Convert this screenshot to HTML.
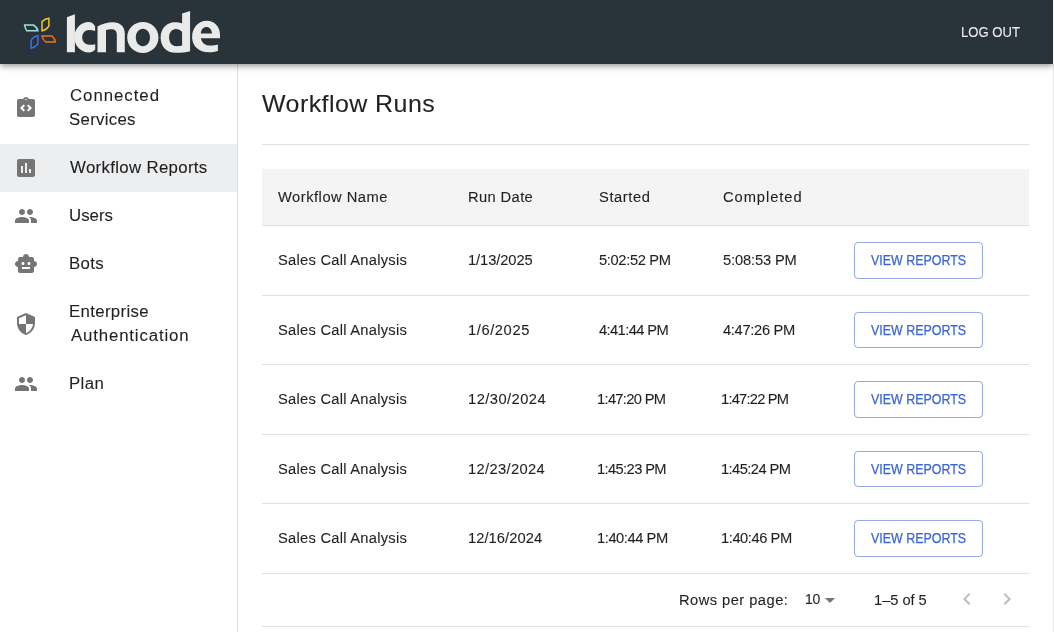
<!DOCTYPE html>
<html><head><meta charset="utf-8">
<style>
*{margin:0;padding:0;box-sizing:border-box}
html,body{width:1054px;height:632px;overflow:hidden;background:#fff;font-family:"Liberation Sans",sans-serif;color:rgba(0,0,0,0.87)}
.abs{position:absolute;white-space:nowrap;-webkit-text-stroke:0.1px currentColor}
#hdr{position:absolute;left:0;top:0;width:1053px;height:64px;background:#29333a;box-shadow:0 2px 4px -1px rgba(0,0,0,0.2),0 4px 5px 0 rgba(0,0,0,0.14),0 1px 10px 0 rgba(0,0,0,0.12);z-index:5}
#edge{position:absolute;left:1053px;top:0;width:1px;height:632px;background:#e6e6e6}
#edgetop{position:absolute;left:1053px;top:0;width:1px;height:64px;background:#f4f4f4;z-index:6}
#side{position:absolute;left:0;top:64px;width:238px;height:568px;border-right:1px solid #e0e0e0;background:#fff}
.sel{position:absolute;left:0;top:144px;width:237px;height:48px;background:#edeef0}
.nav{font-size:16px;line-height:24px;color:rgba(0,0,0,0.87)}
.ico{position:absolute;fill:#757575}
.t14{font-size:14px;line-height:20px}
.line{position:absolute;height:1px;background:#e0e0e0}
.btn{position:absolute;left:854px;width:129px;height:36.5px;border:1px solid rgba(59,101,212,0.55);border-radius:4px;color:#3b65d4;font-size:13px;line-height:34px;text-align:center;letter-spacing:0px}
#root{position:absolute;left:0;top:0;width:1054px;height:632px;overflow:hidden;background:#fff;will-change:transform}
</style></head><body><div id="root">
<div id="hdr">
  <svg width="230" height="64" style="position:absolute;left:0;top:0" viewBox="0 0 230 64">
    <g fill="none" stroke-width="1.5" stroke-linejoin="miter">
      <path d="M24.6 25 L33.4 25 C35.8 26.5 37.5 28.5 37.9 30.8 L26.8 30.8 C25.7 29 24.8 27 24.6 25 Z" stroke="#9de2db"/>
      <path d="M42 30.8 L42 21.6 C44 19.8 46.3 18.6 48.9 18.3 L48.9 26 C47.2 28.5 44.8 30.4 42 30.8 Z" stroke="#f3c52c"/>
      <path d="M37.9 35.7 L37.9 44 C36 46.1 33.7 47.8 31.1 48.3 L31.1 40.3 C32.7 37.8 35 36.1 37.9 35.7 Z" stroke="#3b6fe8"/>
      <path d="M42 36 L52 36 C53.8 37.6 55 39.7 55.2 42 L45.7 42 C43.7 40.4 42.3 38.4 42 36 Z" stroke="#ee7519"/>
    </g>
    <g fill="#eaeae9" fill-rule="evenodd">
      <path d="M66.9 17.3 L74.9 14.2 L74.9 52.3 L66.9 52.3 Z"/>
      <path d="M95.1 31 L95.1 26.3 C93.4 23.6 91.3 22.1 88.8 22.1 C80.8 22.1 74.3 28.9 74.3 37.3 C74.3 45.7 80.8 52.5 88.8 52.5 C91.3 52.5 93.6 51.5 95.2 49.5 L95.2 44.2 C93.8 44.6 90.5 44.8 88.9 44.7 C85.2 44.7 82.2 41.4 82.2 37.3 C82.2 33.2 85.2 30 88.9 30 C91 30 93.2 30.4 95.1 31 Z"/>
      <path d="M97.5 52.3 L97.5 26.4 C101.5 24.4 107.5 22.3 113 22.3 C120 22.3 124.8 26.5 124.8 33.5 L124.8 52.3 L116.8 52.3 L116.8 34.5 C116.8 31.2 114.8 29.3 111.5 29.3 C109.5 29.3 107.5 29.6 106 30.1 L106 52.3 Z"/>
      <path d="M142.85 22.1 C151.6 22.1 158.5 28.8 158.5 37.55 C158.5 46.3 151.6 53 142.85 53 C134.1 53 127.2 46.3 127.2 37.55 C127.2 28.8 134.1 22.1 142.85 22.1 Z M142.9 28.8 C138.9 28.8 135.8 32.6 135.8 37.55 C135.8 42.5 138.9 46.3 142.9 46.3 C146.9 46.3 150 42.5 150 37.55 C150 32.6 146.9 28.8 142.9 28.8 Z"/>
      <path d="M182.1 13.5 L190.1 10.9 L190.1 51.3 C186.5 52.4 181 52.8 175.4 52.8 C166.4 52.8 160.6 46.3 160.6 37.5 C160.6 28.6 166.6 22.2 174.6 22.2 C177.4 22.2 180 22.6 182.1 23.3 Z M182.1 32 C180.5 30 178.3 29 175.8 29 C171.8 29 169.1 32.5 169.1 37.6 C169.1 42.8 172 46.3 176.3 46.3 C178.5 46.3 180.5 46 182.1 45.5 Z"/>
      <path d="M220 38.2 L200.9 38.2 C201.6 42.7 205.1 45.6 210.6 45.6 C213.3 45.6 215.6 45.1 217.9 44.4 L217.9 50.9 C215.3 51.8 212.3 52.2 209 52.2 C198.6 52.2 192.1 46 192.1 36.9 C192.1 27.5 198.6 20.7 206.5 20.7 C214.5 20.7 220 26.5 220 34.5 Z M200.8 33.4 L212 33.4 C211.7 29.5 209.5 27.1 206.4 27.1 C203.3 27.1 201.2 29.5 200.8 33.4 Z"/>
    </g>
  </svg>
  <div class="abs" style="left:960.7px;top:22px;font-size:14px;line-height:20px;transform:scaleX(0.935);transform-origin:0 0;color:#ececec">LOG OUT</div>
</div>
<div id="edge"></div><div id="edgetop"></div>


<div id="side"></div><div class="sel"></div>
<svg class="abs" style="left:14px;top:96px" width="24" height="24" viewBox="0 0 24 24"><path fill="#757575" d="M19 3h-4.18C14.4 1.84 13.3 1 12 1s-2.4.84-2.82 2H5c-.14 0-.27.01-.4.04-.39.08-.74.28-1.01.55-.18.18-.33.4-.43.64S3 4.72 3 5v14c0 .27.05.54.13.78s.25.46.43.64c.27.27.62.47 1.01.55.13.02.26.03.4.03h14c1.1 0 2-.9 2-2V5c0-1.1-.9-2-2-2zm-8 11.17-1.41 1.42L6 12l3.59-3.59L11 9.83 8.84 12 11 14.17zm1-9.92c-.41 0-.75-.34-.75-.75s.34-.75.75-.75.75.34.75.75-.34.75-.75.75zm2.41 11.34L13 14.17 15.16 12 13 9.83l1.41-1.42L18 12l-3.59 3.59z"/></svg>
<svg class="abs" style="left:14px;top:156px" width="24" height="24" viewBox="0 0 24 24"><path fill="#757575" d="M19 3H5c-1.1 0-2 .9-2 2v14c0 1.1.9 2 2 2h14c1.1 0 2-.9 2-2V5c0-1.1-.9-2-2-2zM9 17H7v-7h2v7zm4 0h-2V7h2v10zm4 0h-2v-4h2v4z"/></svg>
<svg class="abs" style="left:14px;top:204px" width="24" height="24" viewBox="0 0 24 24"><path fill="#757575" d="M16 11c1.66 0 2.99-1.34 2.99-3S17.66 5 16 5c-1.66 0-3 1.34-3 3s1.34 3 3 3zm-8 0c1.66 0 2.99-1.34 2.99-3S9.66 5 8 5C6.34 5 5 6.34 5 8s1.34 3 3 3zm0 2c-2.33 0-7 1.17-7 3.5V19h14v-2.5c0-2.33-4.67-3.5-7-3.5zm8 0c-.29 0-.62.02-.97.05 1.16.84 1.97 1.97 1.97 3.45V19h6v-2.5c0-2.33-4.67-3.5-7-3.5z"/></svg>
<svg class="abs" style="left:14px;top:252px" width="24" height="24" viewBox="0 0 24 24"><path fill="#757575" d="M20 9V7c0-1.1-.9-2-2-2h-3c0-1.66-1.34-3-3-3S9 3.34 9 5H6c-1.1 0-2 .9-2 2v2c-1.66 0-3 1.34-3 3s1.34 3 3 3v4c0 1.1.9 2 2 2h12c1.1 0 2-.9 2-2v-4c1.66 0 3-1.34 3-3s-1.34-3-3-3zM7.5 11.5c0-.83.67-1.5 1.5-1.5s1.5.67 1.5 1.5S9.83 13 9 13s-1.5-.67-1.5-1.5zM16 17H8v-2h8v2zm-1-4c-.83 0-1.5-.67-1.5-1.5S14.17 10 15 10s1.5.67 1.5 1.5S15.83 13 15 13z"/></svg>
<svg class="abs" style="left:14px;top:312px" width="24" height="24" viewBox="0 0 24 24"><path fill="#757575" d="M12 1 3 5v6c0 5.55 3.84 10.74 9 12 5.16-1.26 9-6.45 9-12V5l-9-4zm0 10.99h7c-.53 4.12-3.28 7.79-7 8.94V12H5V6.3l7-3.11v8.8z"/></svg>
<svg class="abs" style="left:14px;top:372px" width="24" height="24" viewBox="0 0 24 24"><path fill="#757575" d="M16 11c1.66 0 2.99-1.34 2.99-3S17.66 5 16 5c-1.66 0-3 1.34-3 3s1.34 3 3 3zm-8 0c1.66 0 2.99-1.34 2.99-3S9.66 5 8 5C6.34 5 5 6.34 5 8s1.34 3 3 3zm0 2c-2.33 0-7 1.17-7 3.5V19h14v-2.5c0-2.33-4.67-3.5-7-3.5zm8 0c-.29 0-.62.02-.97.05 1.16.84 1.97 1.97 1.97 3.45V19h6v-2.5c0-2.33-4.67-3.5-7-3.5z"/></svg>
<div class="line" style="left:262px;top:144px;width:767px"></div>
<div style="position:absolute;left:262px;top:169px;width:767px;height:56px;background:#f4f4f4"></div>
<div class="line" style="left:262px;top:225px;width:767px"></div>
<div class="line" style="left:262px;top:295px;width:767px"></div>
<div class="line" style="left:262px;top:364px;width:767px"></div>
<div class="line" style="left:262px;top:434px;width:767px"></div>
<div class="line" style="left:262px;top:503px;width:767px"></div>
<div class="line" style="left:262px;top:573px;width:767px"></div>
<div class="line" style="left:262px;top:626px;width:767px"></div>
<div class="abs" style="left:70.12px;top:84px;font-size:16.0px;line-height:24px;letter-spacing:0.923px;transform:scaleX(1.05);transform-origin:0 0;">Connected</div>
<div class="abs" style="left:69.32px;top:108px;font-size:16.0px;line-height:24px;letter-spacing:0.276px;transform:scaleX(1.05);transform-origin:0 0;">Services</div>
<div class="abs" style="left:70.06px;top:156px;font-size:16.0px;line-height:24px;letter-spacing:0.318px;transform:scaleX(1.05);transform-origin:0 0;">Workflow Reports</div>
<div class="abs" style="left:69.26px;top:204px;font-size:16.0px;line-height:24px;letter-spacing:0.028px;transform:scaleX(1.05);transform-origin:0 0;">Users</div>
<div class="abs" style="left:69.26px;top:252px;font-size:16.0px;line-height:24px;letter-spacing:0.311px;transform:scaleX(1.05);transform-origin:0 0;">Bots</div>
<div class="abs" style="left:69.20px;top:300px;font-size:16.0px;line-height:24px;letter-spacing:0.324px;transform:scaleX(1.05);transform-origin:0 0;">Enterprise</div>
<div class="abs" style="left:70.80px;top:324px;font-size:16.0px;line-height:24px;letter-spacing:0.809px;transform:scaleX(1.05);transform-origin:0 0;">Authentication</div>
<div class="abs" style="left:69.20px;top:372px;font-size:16.0px;line-height:24px;letter-spacing:0.354px;transform:scaleX(1.05);transform-origin:0 0;">Plan</div>
<div class="abs" style="left:262.12px;top:88px;font-size:24px;line-height:32px;letter-spacing:0.429px;transform:scaleX(1.04);transform-origin:0 0;">Workflow Runs</div>
<div class="abs" style="left:278.18px;top:187px;font-size:14px;line-height:20px;letter-spacing:0.476px;transform:scaleX(1.05);transform-origin:0 0;">Workflow Name</div>
<div class="abs" style="left:468.32px;top:187px;font-size:14px;line-height:20px;letter-spacing:0.367px;transform:scaleX(1.05);transform-origin:0 0;">Run Date</div>
<div class="abs" style="left:598.68px;top:187px;font-size:14px;line-height:20px;letter-spacing:0.565px;transform:scaleX(1.05);transform-origin:0 0;">Started</div>
<div class="abs" style="left:722.80px;top:187px;font-size:14px;line-height:20px;letter-spacing:0.898px;transform:scaleX(1.05);transform-origin:0 0;">Completed</div>
<div class="abs" style="left:278.30px;top:250px;font-size:14px;line-height:20px;letter-spacing:0.242px;transform:scaleX(1.05);transform-origin:0 0;">Sales Call Analysis</div>
<div class="abs" style="left:468.38px;top:250px;font-size:14px;line-height:20px;letter-spacing:-0.086px;transform:scaleX(1.05);transform-origin:0 0;">1/13/2025</div>
<div class="abs" style="left:598.68px;top:250px;font-size:14px;line-height:20px;letter-spacing:-0.341px;transform:scaleX(1.05);transform-origin:0 0;">5:02:52 PM</div>
<div class="abs" style="left:722.68px;top:250px;font-size:14px;line-height:20px;letter-spacing:-0.146px;transform:scaleX(1.05);transform-origin:0 0;">5:08:53 PM</div>
<div class="abs" style="left:278.30px;top:320px;font-size:14px;line-height:20px;letter-spacing:0.242px;transform:scaleX(1.05);transform-origin:0 0;">Sales Call Analysis</div>
<div class="abs" style="left:468.38px;top:320px;font-size:14px;line-height:20px;letter-spacing:0.558px;transform:scaleX(1.05);transform-origin:0 0;">1/6/2025</div>
<div class="abs" style="left:598.68px;top:320px;font-size:14px;line-height:20px;letter-spacing:-0.577px;transform:scaleX(1.05);transform-origin:0 0;">4:41:44 PM</div>
<div class="abs" style="left:722.68px;top:320px;font-size:14px;line-height:20px;letter-spacing:-0.305px;transform:scaleX(1.05);transform-origin:0 0;">4:47:26 PM</div>
<div class="abs" style="left:278.30px;top:389px;font-size:14px;line-height:20px;letter-spacing:0.242px;transform:scaleX(1.05);transform-origin:0 0;">Sales Call Analysis</div>
<div class="abs" style="left:468.38px;top:389px;font-size:14px;line-height:20px;letter-spacing:0.432px;transform:scaleX(1.05);transform-origin:0 0;">12/30/2024</div>
<div class="abs" style="left:597.26px;top:389px;font-size:14px;line-height:20px;letter-spacing:-0.654px;transform:scaleX(1.05);transform-origin:0 0;">1:47:20 PM</div>
<div class="abs" style="left:721.26px;top:389px;font-size:14px;line-height:20px;letter-spacing:-0.753px;transform:scaleX(1.05);transform-origin:0 0;">1:47:22 PM</div>
<div class="abs" style="left:278.30px;top:459px;font-size:14px;line-height:20px;letter-spacing:0.242px;transform:scaleX(1.05);transform-origin:0 0;">Sales Call Analysis</div>
<div class="abs" style="left:468.38px;top:459px;font-size:14px;line-height:20px;letter-spacing:0.326px;transform:scaleX(1.05);transform-origin:0 0;">12/23/2024</div>
<div class="abs" style="left:597.26px;top:459px;font-size:14px;line-height:20px;letter-spacing:-0.594px;transform:scaleX(1.05);transform-origin:0 0;">1:45:23 PM</div>
<div class="abs" style="left:721.26px;top:459px;font-size:14px;line-height:20px;letter-spacing:-0.548px;transform:scaleX(1.05);transform-origin:0 0;">1:45:24 PM</div>
<div class="abs" style="left:278.30px;top:528px;font-size:14px;line-height:20px;letter-spacing:0.242px;transform:scaleX(1.05);transform-origin:0 0;">Sales Call Analysis</div>
<div class="abs" style="left:468.38px;top:528px;font-size:14px;line-height:20px;letter-spacing:0.054px;transform:scaleX(1.05);transform-origin:0 0;">12/16/2024</div>
<div class="abs" style="left:597.26px;top:528px;font-size:14px;line-height:20px;letter-spacing:-0.421px;transform:scaleX(1.05);transform-origin:0 0;">1:40:44 PM</div>
<div class="abs" style="left:721.26px;top:528px;font-size:14px;line-height:20px;letter-spacing:-0.421px;transform:scaleX(1.05);transform-origin:0 0;">1:40:46 PM</div>
<div class="abs" style="left:678.94px;top:590px;font-size:14px;line-height:20px;letter-spacing:0.431px;transform:scaleX(1.05);transform-origin:0 0;">Rows per page:</div>
<div class="abs" style="left:805.00px;top:589px;font-size:14px;line-height:20px;letter-spacing:-0.400px;">10</div>
<div class="abs" style="left:873.94px;top:590px;font-size:14px;line-height:20px;letter-spacing:-0.045px;transform:scaleX(1.05);transform-origin:0 0;">1–5 of 5</div>
<div class="btn" style="top:242px"></div>
<div class="abs" style="left:870.5px;top:250px;font-size:14px;line-height:20px;color:#3b65d4;transform:scaleX(0.888);transform-origin:0 0;-webkit-text-stroke:0.25px #3b65d4">VIEW REPORTS</div>
<div class="btn" style="top:311.5px"></div>
<div class="abs" style="left:870.5px;top:320px;font-size:14px;line-height:20px;color:#3b65d4;transform:scaleX(0.888);transform-origin:0 0;-webkit-text-stroke:0.25px #3b65d4">VIEW REPORTS</div>
<div class="btn" style="top:381px"></div>
<div class="abs" style="left:870.5px;top:389px;font-size:14px;line-height:20px;color:#3b65d4;transform:scaleX(0.888);transform-origin:0 0;-webkit-text-stroke:0.25px #3b65d4">VIEW REPORTS</div>
<div class="btn" style="top:450.5px"></div>
<div class="abs" style="left:870.5px;top:459px;font-size:14px;line-height:20px;color:#3b65d4;transform:scaleX(0.888);transform-origin:0 0;-webkit-text-stroke:0.25px #3b65d4">VIEW REPORTS</div>
<div class="btn" style="top:520px"></div>
<div class="abs" style="left:870.5px;top:528px;font-size:14px;line-height:20px;color:#3b65d4;transform:scaleX(0.888);transform-origin:0 0;-webkit-text-stroke:0.25px #3b65d4">VIEW REPORTS</div>
<svg class="abs" style="left:818px;top:588px" width="24" height="24" viewBox="0 0 24 24"><path fill="#757575" d="M7 10l5 5 5-5z"/></svg>
<svg class="abs" style="left:955px;top:587px" width="24" height="24" viewBox="0 0 24 24"><path fill="rgba(0,0,0,0.26)" d="M15.41 16.59 10.83 12l4.58-4.59L14 6l-6 6 6 6 1.41-1.41z"/></svg>
<svg class="abs" style="left:995px;top:587px" width="24" height="24" viewBox="0 0 24 24"><path fill="rgba(0,0,0,0.26)" d="M8.59 16.59 13.17 12 8.59 7.41 10 6l6 6-6 6-1.41-1.41z"/></svg>
</div></body></html>
